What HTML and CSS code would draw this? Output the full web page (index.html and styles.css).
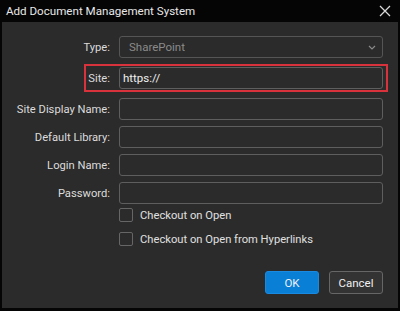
FILE: index.html
```html
<!DOCTYPE html>
<html lang="en">
<head>
    <meta charset="UTF-8">
    <title>Add Document Management System</title>
    <link rel="stylesheet" href="styles.css">
</head>
<body>
    <div class="dialog">
        <div class="titlebar">
            <span class="title">Add Document Management System</span>
            <svg class="close" width="12" height="12" viewBox="0 0 12 12">
                <path d="M1 1 L11 11 M11 1 L1 11" stroke="#d8d8d8" stroke-width="1.3" fill="none"/>
            </svg>
        </div>
        <div class="content">
            <div class="form">
                <div class="row">
                    <label>Type:</label>
                    <div class="field select">
                        <span>SharePoint</span>
                        <svg width="8" height="5" viewBox="0 0 8 5">
                            <path d="M1 1 L4 4 L7 1" stroke="#8a8a8a" stroke-width="1.2" fill="none"/>
                        </svg>
                    </div>
                </div>
                <div class="row row-site">
                    <span class="highlight"></span>
                    <label>Site:</label>
                    <div class="field">https://</div>
                </div>
                <div class="row">
                    <label>Site Display Name:</label>
                    <div class="field"></div>
                </div>
                <div class="row">
                    <label>Default Library:</label>
                    <div class="field"></div>
                </div>
                <div class="row">
                    <label>Login Name:</label>
                    <div class="field"></div>
                </div>
                <div class="row">
                    <label>Password:</label>
                    <div class="field"></div>
                </div>
            </div>
            <div class="checks">
                <div class="check"><span class="box"></span>Checkout on Open</div>
                <div class="check"><span class="box"></span>Checkout on Open from Hyperlinks</div>
            </div>
            <div class="actions">
                <button class="btn btn-ok">OK</button>
                <button class="btn btn-cancel">Cancel</button>
            </div>
        </div>
    </div>
</body>
</html>
```

FILE: styles.css
```css
* {
    margin: 0;
    padding: 0;
    box-sizing: border-box;
}

body {
    font-family: Roboto, 'Liberation Sans', sans-serif;
    background: #000;
    color: #e4e4e4;
    width: 400px;
    height: 311px;
    overflow: hidden;
}

.dialog {
    width: 400px;
    height: 311px;
    background: #050505;
    display: flex;
    flex-direction: column;
}

.titlebar {
    height: 22px;
    display: flex;
    align-items: center;
    justify-content: space-between;
    padding: 0 9px 0 6px;
    flex-shrink: 0;
}

.title {
    font-size: 11.6px;
    color: #e8e8e8;
}

.content {
    flex: 1;
    margin: 0 2px 3px 2px;
    background: #2b2b2b;
    padding: 14px 15px 0 6px;
    display: flex;
    flex-direction: column;
}

.form {
    display: flex;
    flex-direction: column;
    gap: 6px;
}

.row {
    display: flex;
    align-items: center;
    gap: 9px;
    height: 22px;
    position: relative;
}

.row label {
    width: 102px;
    text-align: right;
    font-size: 11.2px;
    color: #dcdcdc;
}

.field {
    flex: 1;
    height: 22px;
    border: 1px solid #5e5e5e;
    border-radius: 3px;
    background: #2b2b2b;
    font-size: 11.5px;
    color: #f0f0f0;
    display: flex;
    align-items: center;
    padding: 0 3px;
}

.select {
    justify-content: space-between;
    color: #8a8a8a;
    padding: 0 6px 0 9px;
    border-color: #555;
}

.highlight {
    position: absolute;
    left: 76px;
    top: -3px;
    right: -5px;
    bottom: -3px;
    border: 2px solid #d8323c;
}

.row-site {
    margin-top: 3px;
    margin-bottom: 3px;
}

.checks {
    display: flex;
    flex-direction: column;
    gap: 10px;
    padding-left: 111px;
    margin-top: 4px;
}

.check {
    display: flex;
    align-items: center;
    gap: 7px;
    font-size: 11.2px;
    color: #e0e0e0;
    height: 14px;
}

.box {
    width: 14px;
    height: 14px;
    border: 1px solid #666;
    border-radius: 2px;
}

.actions {
    display: flex;
    justify-content: flex-end;
    gap: 10px;
    margin-top: 25px;
}

.btn {
    width: 54px;
    height: 23px;
    border-radius: 3px;
    font-family: Roboto, 'Liberation Sans', sans-serif;
    font-size: 11.5px;
    color: #f0f0f0;
}

.btn-ok {
    background: #0a7fd6;
    border: 1px solid #1a8ae0;
}

.btn-cancel {
    background: #333;
    border: 1px solid #666;
}
```
